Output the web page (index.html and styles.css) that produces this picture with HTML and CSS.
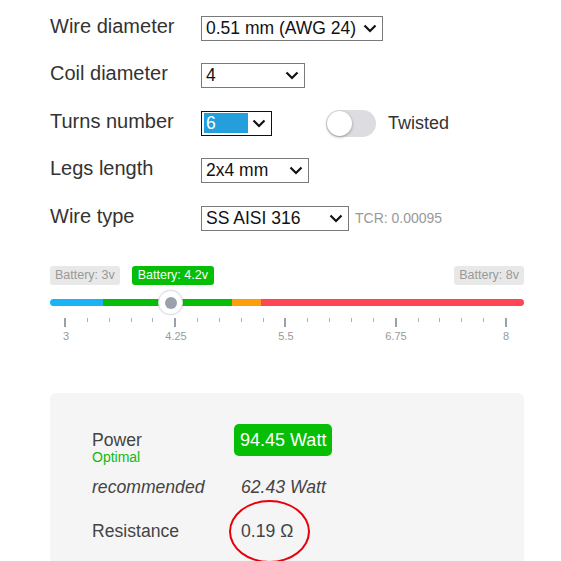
FILE: index.html
```html
<!DOCTYPE html>
<html>
<head>
<meta charset="utf-8">
<link rel="stylesheet" href="styles.css">
</head>
<body>
<div class="page">
  <div class="form">
    <div class="row">
      <div class="label">Wire diameter</div>
      <div class="select w1"><span class="val">0.51 mm (AWG 24)</span><svg class="chev" width="14" height="9" viewBox="0 0 14 9"><path d="M1.5 1.5 L7 7 L12.5 1.5" fill="none" stroke="#111" stroke-width="2.2"/></svg></div>
    </div>
    <div class="row">
      <div class="label">Coil diameter</div>
      <div class="select w2"><span class="val">4</span><svg class="chev" width="14" height="9" viewBox="0 0 14 9"><path d="M1.5 1.5 L7 7 L12.5 1.5" fill="none" stroke="#111" stroke-width="2.2"/></svg></div>
    </div>
    <div class="row">
      <div class="label">Turns number</div>
      <div class="select w3 focus"><span class="val hl">6</span><svg class="chev" width="14" height="9" viewBox="0 0 14 9"><path d="M1.5 1.5 L7 7 L12.5 1.5" fill="none" stroke="#111" stroke-width="2.2"/></svg></div>
      <div class="toggle"><div class="knob"></div></div>
      <div class="toggle-label">Twisted</div>
    </div>
    <div class="row">
      <div class="label">Legs length</div>
      <div class="select w4"><span class="val">2x4 mm</span><svg class="chev" width="14" height="9" viewBox="0 0 14 9"><path d="M1.5 1.5 L7 7 L12.5 1.5" fill="none" stroke="#111" stroke-width="2.2"/></svg></div>
    </div>
    <div class="row">
      <div class="label">Wire type</div>
      <div class="select w5"><span class="val">SS AISI 316</span><svg class="chev" width="14" height="9" viewBox="0 0 14 9"><path d="M1.5 1.5 L7 7 L12.5 1.5" fill="none" stroke="#111" stroke-width="2.2"/></svg></div>
      <div class="tcr">TCR: 0.00095</div>
    </div>
  </div>

  <div class="slider">
    <div class="bubbles">
      <span class="bubble grey">Battery: 3v</span>
      <span class="bubble green cur">Battery: 4.2v</span>
      <span class="spacer"></span>
      <span class="bubble grey">Battery: 8v</span>
    </div>
    <div class="track">
      <div class="seg blue" style="width:53px"></div>
      <div class="seg green" style="width:129px"></div>
      <div class="seg orange" style="width:29px"></div>
      <div class="seg red"></div>
      <div class="thumb"><div class="dot"></div></div>
    </div>
    <div class="ticks">
      <span class="tick major"></span><span class="tick"></span><span class="tick"></span><span class="tick"></span><span class="tick"></span>
      <span class="tick major"></span><span class="tick"></span><span class="tick"></span><span class="tick"></span><span class="tick"></span>
      <span class="tick major"></span><span class="tick"></span><span class="tick"></span><span class="tick"></span><span class="tick"></span>
      <span class="tick major"></span><span class="tick"></span><span class="tick"></span><span class="tick"></span><span class="tick"></span>
      <span class="tick major"></span>
    </div>
    <div class="tick-labels">
      <span>3</span><span>4.25</span><span>5.5</span><span>6.75</span><span>8</span>
    </div>
  </div>

  <div class="card">
    <div class="res-row power">
      <div class="rlabel">Power<div class="optimal">Optimal</div></div>
      <div class="rval"><span class="badge">94.45 Watt</span></div>
    </div>
    <div class="res-row rec">
      <div class="rlabel">recommended</div>
      <div class="rval">62.43 Watt</div>
    </div>
    <div class="res-row resist">
      <div class="rlabel">Resistance</div>
      <div class="rval"><span class="circled">0.19 Ω</span></div>
    </div>
  </div>
</div>
</body>
</html>
```

FILE: styles.css
```css
* { box-sizing: border-box; }
html, body { margin: 0; padding: 0; background: #fff; }
body { font-family: "Liberation Sans", Arial, sans-serif; color: #333; overflow: hidden; }
.page { padding: 0 37px 0 50px; width: 561px; }

.form { padding-top: 15px; display: flex; flex-direction: column; gap: 21.5px; }
.row { display: flex; align-items: center; height: 26px; }
.label { width: 151px; font-size: 20px; color: #333; margin-top: -4px; }
.select {
  height: 25px; border: 1px solid #7a7a7a; background: #fff;
  display: flex; align-items: center; justify-content: space-between;
  padding: 0 5px 0 4px; font-size: 17.5px; color: #111; white-space: nowrap;
}
.select.focus { border-color: #111; padding-left: 2px; }
.val.hl { background: #259fdc; color: #fff; width: 44px; height: 20px; line-height: 20px; padding-left: 2px; }
.chev { display: block; flex: none; }
.w1 { width: 182px; }
.w2 { width: 104px; }
.w3 { width: 71px; }
.w4 { width: 108px; }
.w5 { width: 148px; }

.toggle { margin-left: 54px; width: 50px; height: 27px; border-radius: 14px; background: #dcdce1; position: relative; }
.knob { position: absolute; left: 1px; top: 1px; width: 25px; height: 25px; border-radius: 50%; background: #fff; box-shadow: 0 1px 3px rgba(0,0,0,0.35); }
.toggle-label { margin-left: 12px; font-size: 18px; color: #333; }
.tcr { margin-left: 6px; font-size: 14px; color: #999; }

.slider { margin-top: 35px; width: 474px; }
.bubbles { display: flex; align-items: center; height: 19px; }
.bubble { font-size: 12.5px; line-height: 19px; padding: 0 5px; border-radius: 3px; }
.bubble.grey { background: #e8e8e8; color: #999; }
.bubble.green { background: #05be05; color: #fff; }
.bubble.cur { margin-left: 12px; padding: 0 6px; }
.spacer { flex: 1; }

.track { margin-top: 14px; height: 7px; display: flex; position: relative; border-radius: 4px; overflow: visible; }
.seg { height: 7px; }
.seg.blue { background: #1ab4f5; border-radius: 4px 0 0 4px; }
.seg.green { background: #05be05; }
.seg.orange { background: #fd9e0b; }
.seg.red { background: #ff4551; flex: 1; border-radius: 0 4px 4px 0; }
.thumb {
  position: absolute; left: 108px; top: -9px; width: 25px; height: 25px; border-radius: 50%;
  background: #fff; border: 1px solid #dde1e5; box-shadow: 0 0 2px rgba(0,0,0,0.15);
  display: flex; align-items: center; justify-content: center;
}
.dot { width: 12px; height: 12px; border-radius: 50%; background: #99a2ab; }

.ticks { margin: 12px 0 0 14px; width: 443px; display: flex; justify-content: space-between; align-items: flex-start; }
.tick { width: 1px; height: 4px; background: #a9b0b6; }
.tick.major { width: 2px; height: 9px; background: #9aa2a9; }
.tick-labels { margin: 3px 0 0 0; width: 474px; display: flex; justify-content: space-between; padding: 0 13px 0 11px; font-size: 11px; color: #999; }
.tick-labels span { width: 10px; text-align: center; white-space: nowrap; display: flex; justify-content: center; }

.card { margin-top: 51px; width: 474px; height: 180px; background: #f5f5f5; border-radius: 6px; padding: 31px 0 0 42px; }
.res-row { display: flex; align-items: center; }
.rlabel { width: 142px; font-size: 17.6px; color: #444; }
.rval { font-size: 17.6px; color: #444; }
.power { align-items: flex-start; }
.power .rlabel { padding-top: 6px; line-height: 20px; }
.optimal { font-size: 14px; line-height: 16px; color: #11b911; margin-top: -1px; }
.badge { display: inline-block; background: #05be05; color: #fff; font-size: 18px; padding: 5px 6px; border-radius: 5px; line-height: 22px; }
.rec { margin-top: 12px; font-style: italic; }
.rec .rval { padding-left: 7px; }
.resist { margin-top: 23px; }
.circled { display: inline-block; position: relative; padding-left: 7px; }
.circled::after {
  content: ""; position: absolute; left: -5px; top: -21px; width: 77px; height: 59px;
  border: 2px solid #e6000a; border-radius: 50%;
}
```
